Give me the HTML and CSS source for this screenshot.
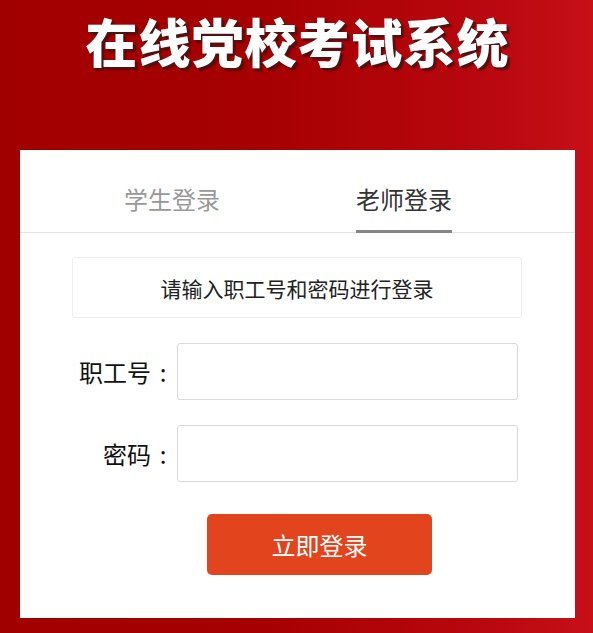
FILE: index.html
```html
<!DOCTYPE html>
<html lang="zh-CN">
<head>
<meta charset="utf-8">
<title>在线党校考试系统</title>
<link rel="stylesheet" href="styles.css">
</head>
<body>
<div class="page">
  <header class="header">
    <h1 class="title">在线党校考试系统</h1>
  </header>
  <main class="card">
    <nav class="tabs">
      <div class="tab">学生登录</div>
      <div class="tab tab-active">老师登录</div>
    </nav>
    <div class="notice">请输入职工号和密码进行登录</div>
    <form class="form">
      <div class="row">
        <label class="label" for="uid">职工号<span class="colon">:</span></label>
        <input class="input" id="uid" type="text">
      </div>
      <div class="row">
        <label class="label" for="pwd">密码<span class="colon">:</span></label>
        <input class="input" id="pwd" type="password">
      </div>
      <div class="actions">
        <button class="btn" type="button">立即登录</button>
      </div>
    </form>
  </main>
</div>
</body>
</html>
```
FILE: styles.css
```css
* { box-sizing: border-box; }
html, body {
  margin: 0;
  padding: 0;
}
body {
  width: 593px;
  height: 633px;
  overflow: hidden;
  font-family: "Noto Sans CJK SC", "Noto Sans", sans-serif;
  background: linear-gradient(90deg, #a10000 0%, #a60002 45%, #b8070e 80%, #c70f18 100%);
}
.page {
  display: flex;
  flex-direction: column;
  height: 633px;
}
.header {
  height: 150px;
  display: flex;
  justify-content: center;
  padding-top: 12px;
}
.title {
  margin: 0;
  color: #fff;
  font-size: 52px;
  font-weight: 900;
  line-height: 58px;
  letter-spacing: 1px;
  padding-left: 2px;
  text-shadow: 2px 2px 0 #4a1414, 3px 3px 2px rgba(0,0,0,0.35);
}
.card {
  width: 555px;
  height: 468px;
  margin-left: 20px;
  background: #fff;
  display: flex;
  flex-direction: column;
}
.tabs {
  display: flex;
  justify-content: center;
  gap: 136px;
  padding-right: 19px;
  height: 83px;
  border-bottom: 1px solid #e3e3e3;
}
.tab {
  font-size: 24px;
  line-height: 32px;
  padding-top: 33px;
  height: 83px;
  color: #999;
  border-bottom: 3px solid transparent;
}
.tab-active {
  color: #333;
  border-bottom-color: #868686;
}
.notice {
  margin: 24px 0 0 52px;
  width: 450px;
  height: 61px;
  border: 1px solid #eee;
  border-radius: 3px;
  display: flex;
  align-items: center;
  justify-content: center;
  font-size: 21px;
  color: #222;
}
.form {
  display: flex;
  flex-direction: column;
  margin: 25px 0 0 0;
}
.row {
  display: flex;
  align-items: center;
  margin-bottom: 25px;
}
.label {
  width: 155px;
  margin-right: 2px;
  text-align: right;
  font-size: 24px;
  color: #111;
}
.colon {
  display: inline-block;
  width: 24px;
  text-align: center;
}
.input {
  width: 341px;
  height: 57px;
  border: 1px solid #d9d9d9;
  border-radius: 3px;
  background: #fff;
  outline: none;
}
.actions {
  display: flex;
  margin-top: 7px;
  padding-left: 187px;
}
.btn {
  width: 225px;
  height: 61px;
  border: none;
  border-radius: 5px;
  background: #e2441d;
  color: #fff;
  font-family: "Noto Sans CJK SC", "Noto Sans", sans-serif;
  font-size: 24px;
  line-height: 1;
  cursor: pointer;
}
```
